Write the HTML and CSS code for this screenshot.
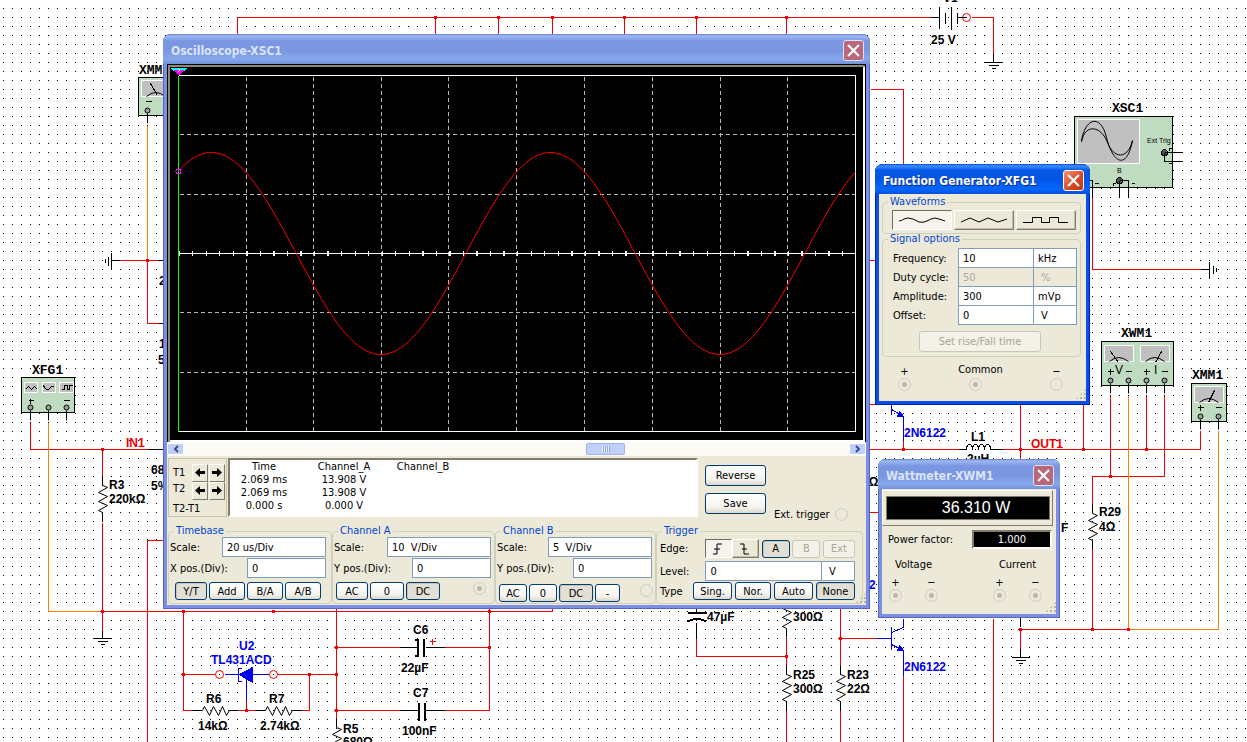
FILE: index.html
```html
<!DOCTYPE html>
<html lang="en">
<head>
<meta charset="utf-8">
<title>Circuit simulation</title>
<link rel="stylesheet" href="styles.css">
</head>
<body>
<main class="desktop">
<svg class="schematic" aria-label="Schematic">
  <defs>
    <pattern id="grid" width="9" height="9" patternUnits="userSpaceOnUse"><rect x="3" y="8" width="1" height="1"/></pattern>
    <g id="pin"><circle r="2.5" class="pin"/><path d="M0 3V13"/></g>
    <path id="res" d="M0 0V9L5 11L-4 16L5 20L-4 25L5 29L-4 34L0 36V45"/>
    <path id="resh" d="M0 0H10L12 -4L17 5L21 -4L26 5L30 -4L34 5L37 0H46"/>
    <g id="meter"><rect width="29" height="16" class="screen"/><path d="M5 16Q14 8 24 16"/></g>
  </defs>
  <rect width="100%" height="100%" fill="url(#grid)"/>
  <g transform="translate(.5 .5)" class="lines">
    <g class="red">
      <path d="M237 34V17H930M435 17V34M498 17V34M552 17V34M624 17V34M696 17V34M786 17V34M971 17H993V53"/>
      <path d="M870 89H903V165M868 260H878M868 404H878M868 449H958M1002 449H1200V430M868 512H880M903 440V449M1020 403V460M1083 403V449"/>
      <path d="M1110 395V476M1146 395V449M1164 395V476H1092V507M1092 548V629M1020 629V648M1020 629H1128M1092 197V269H1200"/>
      <path d="M119 260H157M147 260V323H158M30 422V449H147M102 449V475M102 522V630M102 611H552V606M163 540H147V742"/>
      <path d="M183 611V710H193M183 674H214M277 674H336M309 674V710H300M238 710H255M246 700V710M336 606V718M336 647H399M444 647H489M336 710H399M444 710H489V606"/>
      <path d="M696 638V656H786M786 638V665M786 710V742M840 606V665M840 710V742M840 638H876M903 675V742M993 618V742"/>
      <circle cx="966" cy="17" r="4"/><circle cx="219" cy="674" r="4"/><circle cx="273" cy="674" r="4"/>
      <path d="M429 641H435M432 638V644"/>
    </g>
    <g class="orange"><path d="M147 125V260M48 422V611H102M1128 395V629H1218V430"/></g>
    <g class="blue">
      <path d="M891 402V414M891 409L903 416V440"/><path class="fill" d="M903 416L899 411L897 416Z"/>
      <path d="M224 674H268M246 676V700M241 668H238V681H241"/><path class="fill" d="M239 674L252 667V682Z"/>
      <path d="M876 638H891M891 626V649M891 632L903 627V618M891 644L903 650V675"/><path class="fill" d="M903 650L899 645L897 650Z"/>
    </g>
    <g class="black">
      <path d="M930 17H939M939 6V28M945 12V23M951 6V29M957 12V23M957 17H966M993 53V62M984 62H1002M988 65H998M991 68H995"/>
      <path d="M1200 269H1209M1209 261V278M1213 265V273M1216 267V271M119 260H111M111 252V269M108 256V265M105 258V262M157 260H163M158 323H163M147 449H163"/>
      <path d="M102 630V638M93 638H111M97 641H107M100 644H104M1020 648V657M1011 657H1029M1015 660H1025M1018 663H1022M1020 616V626"/>
      <path d="M958 449H966Q966 444 969 444Q972 444 972 449Q972 444 975 444Q978 444 978 449Q978 444 981 444Q984 444 984 449Q984 444 987 444Q990 444 990 449H1002"/>
      <path d="M399 647H417M426 647H444M399 710H418M424 710H444M696 622V638M696 606V612"/>
      <path class="thick" d="M414 639H417V655H414M423 638V656M418 702V720M424 702V720M687 612H706M687 621Q696 616 706 621"/>
      <use href="#res" x="102" y="476"/><use href="#res" x="1092" y="504"/><use href="#res" x="786" y="592"/><use href="#res" x="786" y="665"/><use href="#res" x="840" y="665"/><use href="#res" x="336" y="718"/>
      <use href="#resh" x="192" y="710"/><use href="#resh" x="255" y="710"/>
    </g>
    <g class="nodes">
      <circle cx="435" cy="17" r="1.5"/><circle cx="498" cy="17" r="1.5"/><circle cx="552" cy="17" r="1.5"/><circle cx="624" cy="17" r="1.5"/><circle cx="696" cy="17" r="1.5"/><circle cx="786" cy="17" r="1.5"/>
      <circle cx="147" cy="260" r="1.5"/><circle cx="102" cy="449" r="1.5"/><circle cx="102" cy="611" r="1.5"/><circle cx="183" cy="611" r="1.5"/><circle cx="273" cy="611" r="1.5"/><circle cx="489" cy="611" r="1.5"/>
      <circle cx="183" cy="674" r="1.5"/><circle cx="309" cy="674" r="1.5"/><circle cx="336" cy="674" r="1.5"/><circle cx="336" cy="647" r="1.5"/><circle cx="336" cy="710" r="1.5"/><circle cx="489" cy="647" r="1.5"/><circle cx="246" cy="710" r="1.5"/>
      <circle cx="786" cy="656" r="1.5"/><circle cx="840" cy="638" r="1.5"/><circle cx="903" cy="449" r="1.5"/><circle cx="1020" cy="449" r="1.5"/><circle cx="1083" cy="449" r="1.5"/><circle cx="1146" cy="449" r="1.5"/>
      <circle cx="1110" cy="476" r="1.5"/><circle cx="1020" cy="629" r="1.5"/><circle cx="1092" cy="629" r="1.5"/><circle cx="1128" cy="629" r="1.5"/>
    </g>
    <g class="black">
      <rect x="1074" y="116" width="98" height="71" class="device"/><rect x="1077" y="119" width="62" height="44" class="screen"/>
      <path class="smooth" d="M1081 141C1084 118 1100 112 1106 137S1126 171 1132 140M1081 141C1085 122 1101 126 1107 142S1127 160 1132 140"/>
      <circle cx="1164" cy="152" r="3" class="jack"/><path d="M1164 152H1182M1164 152V161H1182M1168 148H1171M1169 147V150M1168 163H1172"/>
      <circle cx="1119" cy="180" r="3" class="jack"/><path d="M1119 180V197M1119 180H1128V197M1112 183H1115M1113 182V185M1131 183H1134M1089 180H1092V197M1094 183H1098"/>

      <rect x="1101" y="341" width="72" height="44" class="device"/><use href="#meter" x="1104" y="345"/><use href="#meter" x="1140" y="345"/>
      <path d="M1110 351L1118 362M1161 351L1155 362M1107 371H1113M1110 368V374M1125 371H1131M1143 371H1149M1146 368V374M1161 371H1167"/>
      <use href="#pin" x="1110" y="380"/><use href="#pin" x="1128" y="380"/><use href="#pin" x="1146" y="380"/><use href="#pin" x="1164" y="380"/>

      <rect x="1191" y="383" width="35" height="38" class="device"/><use href="#meter" x="1194" y="386"/>
      <path d="M1214 390L1208 402M1197 407H1203M1200 404V410M1215 407H1221"/><use href="#pin" x="1200" y="416"/><use href="#pin" x="1218" y="416"/>

      <rect x="138" y="77" width="36" height="38" class="device"/><use href="#meter" x="141" y="80"/>
      <path d="M150 83L157 95M145 101H151"/><use href="#pin" x="147" y="110"/>

      <rect x="21" y="377" width="53" height="35" class="device"/>
      <rect x="24" y="382" width="13" height="10" class="screen"/><rect x="42" y="382" width="13" height="10" class="screen"/><rect x="59" y="382" width="14" height="10" class="screen"/>
      <path d="M25 389L28 386L31 389L34 386L37 389M43 385Q46 392 49 388T54 387M61 389H64V385H67V389H69V385H72M28 400H33M30 398V403M63 400H69"/>
      <use href="#pin" x="30" y="407"/><use href="#pin" x="48" y="407"/><use href="#pin" x="66" y="407"/>
    </g>
  </g>
  <g class="name">
    <text x="32" y="374">XFG1</text><text x="139" y="74">XMM2</text><text x="1112" y="112">XSC1</text><text x="1121" y="337">XWM1</text><text x="1192" y="379">XMM1</text>
  </g>
  <g class="label">
    <text x="109" y="489">R3</text><text x="109" y="503">220kΩ</text><text x="151" y="474">68</text><text x="151" y="490">5%</text>
    <text x="159" y="285">2</text><text x="159" y="348">1</text><text x="158" y="364">5</text>
    <text x="943" y="2">V1</text><text x="931" y="44">25 V</text><text x="971" y="441">L1</text><text x="967" y="463">2µH</text>
    <text x="862" y="486">5Ω</text><text x="1061" y="532">F</text><text x="1099" y="516">R29</text><text x="1099" y="531">4Ω</text>
    <text x="413" y="634">C6</text><text x="401" y="672">22µF</text><text x="413" y="697">C7</text><text x="402" y="735">100nF</text><text x="402" y="751">5%</text>
    <text x="206" y="703">R6</text><text x="198" y="730">14kΩ</text><text x="269" y="703">R7</text><text x="260" y="730">2.74kΩ</text><text x="343" y="733">R5</text><text x="343" y="746">680Ω</text>
    <text x="707" y="621">47µF</text><text x="793" y="621">300Ω</text><text x="793" y="679">R25</text><text x="793" y="693">300Ω</text><text x="847" y="679">R23</text><text x="847" y="693">22Ω</text>
  </g>
  <g class="label label-blue"><text x="239" y="650">U2</text><text x="211" y="664">TL431ACD</text><text x="904" y="437">2N6122</text><text x="904" y="671">2N6122</text><text x="869" y="589">2</text></g>
  <g class="label label-red"><text x="126" y="447">IN1</text><text x="1031" y="448">OUT1</text></g>
  <g class="tiny"><text x="1147" y="143">Ext Trig</text><text x="1117" y="173">B</text></g>
  <g class="unit-mark"><text x="1115" y="374">V</text><text x="1154" y="374">I</text></g>
</svg>

<section class="window scope">
  <header class="titlebar"><h2>Oscilloscope-XSC1</h2><button class="close" aria-label="Close"><svg viewBox="0 0 12 12"><path d="M1 1L11 11M11 1L1 11"/></svg></button></header>
  <div class="display">
    <svg class="plot" viewBox="0 0 693 373" preserveAspectRatio="none">
      <g transform="translate(.5 .5)">
        <path class="grat" d="M76 9V364M143 9V364M211 9V364M278 9V364M346 9V364M414 9V364M482 9V364M550 9V364M617 9V364M9 67H685M9 127H685M9 245H685M9 305H685"/>
        <path class="frame" d="M8 8H685V364H8M8 186H685"/>
        <path class="frame ticks" pathLength="500" d="M8 186H685"/>
        <path class="cursor" d="M8 8V364"/>
        <svg x="8" y="0" width="677" height="373"><path class="trace" d="M-51.75 186c27.6-51.7 54.1-101 84.75-101s57.1 49.3 84.75 101c27.6 51.7 54.1 101 84.75 101s57.1-49.3 84.75-101c27.6-51.7 54.1-101 84.75-101s57.1 49.3 84.75 101c27.6 51.7 54.1 101 84.75 101s57.1-49.3 84.75-101c27.6-51.7 54.1-101 84.75-101"/></svg>
        <path fill="#0ff" d="M-1 0H17L14 3H2Z"/><path fill="#f0f" d="M2 2H14L8 8Z"/><path stroke="#ff8" d="M7 2H9M9 3L7 5"/>
        <circle cx="8" cy="104" r="2.5" fill="none" stroke="#f0f"/>
      </g>
    </svg>
  </div>
  <div class="scroll">
    <button aria-label="Scroll left"><svg viewBox="0 0 6 8"><path d="M5 1L2 4L5 7"/></svg></button>
    <span class="thumb"></span>
    <button aria-label="Scroll right"><svg viewBox="0 0 6 8"><path d="M1 1L4 4L1 7"/></svg></button>
  </div>
  <div class="readout">
    <div class="cursors">
      <span>T1</span><div class="pair"><button aria-label="T1 left"><svg viewBox="0 0 10 10"><path d="M5 0V3H10V6H5V9L0 4.500Z"/></svg></button><button aria-label="T1 right"><svg viewBox="0 0 10 10"><path d="M5 0V3H0V6H5V9L10 4.500Z"/></svg></button></div>
      <span class="second">T2</span><div class="pair"><button aria-label="T2 left"><svg viewBox="0 0 10 10"><path d="M5 0V3H10V6H5V9L0 4.500Z"/></svg></button><button aria-label="T2 right"><svg viewBox="0 0 10 10"><path d="M5 0V3H0V6H5V9L10 4.500Z"/></svg></button></div>
      <span class="delta">T2-T1</span>
    </div>
    <div class="list">
      <table>
        <tr><th>Time</th><th>Channel_A</th><th>Channel_B</th></tr>
        <tr><td>2.069 ms</td><td>13.908 V</td><td></td></tr>
        <tr><td>2.069 ms</td><td>13.908 V</td><td></td></tr>
        <tr><td>0.000 s</td><td>0.000 V</td><td></td></tr>
      </table>
    </div>
    <div class="actions">
      <button class="btn">Reverse</button><button class="btn">Save</button>
      <label class="ext">Ext. trigger <input type="radio" disabled></label>
    </div>
  </div>
  <div class="groups">
    <fieldset><legend>Timebase</legend>
      <div class="row"><label for="ts">Scale:</label><input id="ts" class="field wide" value="20 us/Div"></div>
      <div class="row"><label for="tx">X pos.(Div):</label><input id="tx" class="field" value="0"></div>
      <div class="buttons"><button class="btn on w31">Y/T</button><button class="btn w36">Add</button><button class="btn w36">B/A</button><button class="btn w36">A/B</button></div>
    </fieldset>
    <fieldset><legend>Channel A</legend>
      <div class="row"><label for="as">Scale:</label><input id="as" class="field wide" value="10  V/Div"></div>
      <div class="row"><label for="ay">Y pos.(Div):</label><input id="ay" class="field" value="0"></div>
      <div class="buttons chan"><button class="btn w31">AC</button><button class="btn w34">0</button><button class="btn on w34">DC</button><input type="radio" aria-label="Channel A terminal" class="linked" disabled></div>
    </fieldset>
    <fieldset><legend>Channel B</legend>
      <div class="row"><label for="bs">Scale:</label><input id="bs" class="field wide" value="5  V/Div"></div>
      <div class="row"><label for="by">Y pos.(Div):</label><input id="by" class="field" value="0"></div>
      <div class="buttons chan low"><button class="btn w28">AC</button><button class="btn w28">0</button><button class="btn on w34">DC</button><button class="btn w25">-</button><input type="radio" aria-label="Channel B terminal" disabled></div>
    </fieldset>
    <fieldset class="trigger"><legend>Trigger</legend>
      <div class="row edge"><span>Edge:</span><div class="edges"><button class="flat sunk" aria-label="Rising edge"><svg viewBox="0 0 12 12"><path d="M1 11H5V1H10M2 6H8"/></svg></button><button class="flat" aria-label="Falling edge"><svg viewBox="0 0 12 12"><path d="M1 1H5V11H10M3 6H8"/></svg></button></div><button class="btn on w28">A</button><button class="btn w28" disabled>B</button><button class="btn w31" disabled>Ext</button></div>
      <div class="row level"><label for="lv">Level:</label><input id="lv" class="field" value="0"><input class="field unit" aria-label="Level unit" value="V"></div>
      <div class="row type"><span>Type</span><button class="btn w38">Sing.</button><button class="btn w36">Nor.</button><button class="btn w38">Auto</button><button class="btn on w38">None</button></div>
    </fieldset>
  </div>
  <span class="grip"></span>
</section>

<section class="window active fgen">
  <header class="titlebar"><h2>Function Generator-XFG1</h2><button class="close" aria-label="Close"><svg viewBox="0 0 12 12"><path d="M1 1L11 11M11 1L1 11"/></svg></button></header>
  <fieldset class="waves"><legend>Waveforms</legend>
    <div class="wavebar">
      <button class="flat sunk" aria-label="Sine"><svg viewBox="0 0 46 8"><path d="M0 5Q2 5 5 3T14 3L20 6Q24 7 28 5L32 3Q36 1 40 3L46 5"/></svg></button>
      <button class="flat" aria-label="Triangle"><svg viewBox="0 0 46 8"><path d="M0 6L9 2L18 6L27 2L37 6L46 3"/></svg></button>
      <button class="flat" aria-label="Square"><svg viewBox="0 0 46 8"><path d="M0 6.500H9.500V1.500H18.500V6.500H26.500V1.500H35.500V6.500H45"/></svg></button>
    </div>
  </fieldset>
  <fieldset class="signal"><legend>Signal options</legend>
    <div class="params">
      <label for="fr">Frequency:</label><input id="fr" class="field" value="10"><input class="field" aria-label="Frequency unit" value="kHz">
      <label for="du">Duty cycle:</label><input id="du" class="field" value="50" disabled><input class="field pad" aria-label="Duty cycle unit" value="%" disabled>
      <label for="am">Amplitude:</label><input id="am" class="field" value="300"><input class="field" aria-label="Amplitude unit" value="mVp">
      <label for="of">Offset:</label><input id="of" class="field" value="0"><input class="field pad" aria-label="Offset unit" value="V">
    </div>
    <button class="btn rise" disabled>Set rise/Fall time</button>
  </fieldset>
  <div class="terminals">
    <label>+<input type="radio" class="linked" disabled></label><label>Common<input type="radio" class="linked" disabled></label><label>−<input type="radio" disabled></label>
  </div>
  <span class="grip"></span>
</section>

<section class="window watt">
  <header class="titlebar"><h2>Wattmeter-XWM1</h2><button class="close" aria-label="Close"><svg viewBox="0 0 12 12"><path d="M1 1L11 11M11 1L1 11"/></svg></button></header>
  <div class="panel"><output class="power">36.310 W</output></div>
  <div class="factor"><span>Power factor:</span><output>1.000</output></div>
  <div class="probes">
    <div class="probe"><span>Voltage</span><div><label>+<input type="radio" class="linked" disabled></label><label>−<input type="radio" class="linked" disabled></label></div></div>
    <div class="probe"><span>Current</span><div><label>+<input type="radio" class="linked" disabled></label><label>−<input type="radio" class="linked" disabled></label></div></div>
  </div>
  <span class="grip"></span>
</section>
</main>
</body>
</html>
```
FILE: styles.css
```css
* { box-sizing: border-box; }
body { margin: 0; background: #fff; }
.desktop, .desktop button, .desktop input {
  font-family: "DejaVu Sans Condensed", "Noto Sans", sans-serif;
  font-size: 11px;
  color: #000;
}
.desktop { position: relative; min-height: 100vh; overflow: hidden; line-height: 13px; }

/* Schematic canvas */
.schematic { position: absolute; inset: 0; width: 100%; height: 100%; }
.lines { fill: none; stroke-width: 1; shape-rendering: crispEdges; }
.red { stroke: #f00000; }
.orange { stroke: #ff8000; }
.blue { stroke: #0000f0; }
.blue .fill { fill: #0000f0; }
.black { stroke: #000; }
.thick { stroke-width: 2; }
.red circle, .smooth, .black use { shape-rendering: auto; }
.nodes { fill: #f00000; stroke: #f00000; }
.device { fill: #c0dcc0; }
.screen { fill: #c0c0c0; stroke: #fff; }
.pin { fill: #a0a0a4; }
.jack { fill: #555; }
.name { font: bold 13px "Liberation Mono", monospace; }
.label { font: bold 12px "Liberation Sans", sans-serif; white-space: pre; }
.label-blue { fill: #0000f0; }
.label-red { fill: #f00000; }
.tiny { font: 7px "Liberation Sans", sans-serif; }
.unit-mark { font: 12px "Liberation Sans", sans-serif; }

/* Windows */
.window {
  position: absolute;
  padding: 0 4px 4px;
  border-radius: 8px 8px 0 0;
  background: #ece9d8;
  background-clip: content-box;
  box-shadow: inset 0 0 0 1px #5a64c8, inset 0 0 0 4px #7b8fe3;
}
.window.active { box-shadow: inset 0 0 0 1px #0020b0, inset 0 0 0 4px #0a50e8; }
.scope { left: 163px; top: 34px; width: 707px; }
.fgen { left: 875px; top: 164px; width: 215px; }
.watt { left: 878px; top: 459px; width: 182px; }
.titlebar {
  display: flex;
  align-items: center;
  justify-content: space-between;
  height: 30px;
  margin: 0 -4px;
  padding: 3px 6px 0 8px;
  border-radius: 8px 8px 0 0;
  background: linear-gradient(#6a80d0 0, #9db8f4 2px, #7b96e1 7px, #7b96e1 17px, #86a8ec 25px, #7590da 30px);
}
.active .titlebar { background: linear-gradient(#0848c8 0, #3a90ff 2px, #0858e8 6px, #0454e4 15px, #0666fc 25px, #0450d8 30px); }
.titlebar h2 { margin: 0; font-size: 12px; line-height: 16px; color: #dbe5fa; white-space: nowrap; }
.active h2 { color: #fff; text-shadow: 1px 1px #0a2a90; }
.close { width: 21px; height: 21px; padding: 3px; border: 1px solid #dce3f8; border-radius: 3px; background: #b86878; }
.active .close { background: linear-gradient(135deg, #f09078, #d84820 60%, #c03810); border-color: #fff; }
.close svg { display: block; width: 13px; height: 13px; stroke: #fff; stroke-width: 2; }
.grip {
  position: absolute;
  right: 4px;
  bottom: 4px;
  width: 12px;
  height: 12px;
  background: repeating-conic-gradient(#b8b4a2 0 25%, transparent 0 100%) 0 0 / 4px 4px;
  clip-path: polygon(100% 0, 100% 100%, 0 100%);
}

/* Controls */
.btn {
  height: 18px;
  padding: 0;
  border: 1px solid #003c74;
  border-radius: 3px;
  background: linear-gradient(#fff, #f4f3ee 70%, #dcd8cc);
  text-align: center;
}
.btn.on { background: #e2dfd4; box-shadow: inset 1px 1px #c8c4b8; }
.desktop .btn:disabled { border-color: #c9c7ba; background: #f3f1e8; color: #a8a595; }
.w25 { width: 25px; }
.w28 { width: 28px; }
.w31 { width: 32px; }
.w34 { width: 34px; }
.w36 { width: 36px; }
.w38 { width: 39px; }
.field { width: 79px; height: 20px; min-width: 0; padding: 0 4px; border: 1px solid #7f9db9; border-radius: 0; background: #fff; }
.field.wide { width: 104px; }
.desktop .field:disabled { background: #ece9d8; color: #aca899; }
.flat { display: flex; align-items: center; justify-content: center; padding: 0; border: 1px solid; border-color: #fff #807c6e #807c6e #fff; background: #ece9d8; box-shadow: inset -1px -1px #c0bcac; }
.flat.sunk { border-color: #706c60 #fff #fff #706c60; background: #f5f3eb; box-shadow: none; }
.flat svg { fill: none; stroke: #000; }
input[type="radio"] { appearance: none; width: 13px; height: 13px; margin: 0; border: 1px solid #cfccbe; border-radius: 50%; }
input[type="radio"].linked { background: radial-gradient(circle, #bbb8aa 0 2px, transparent 3px); }
fieldset { min-width: 0; margin: 0; padding: 0; border: 1px solid #d0d0bf; border-radius: 4px; }
legend { margin-left: 5px; padding: 0 2px; line-height: 12px; color: #0046d5; }

/* Oscilloscope */
.display { height: 378px; padding: 2px; border: 1px solid #000; border-bottom: 0; background: #000; box-shadow: inset 2px 2px #8c897c, inset -2px -2px #fff; }
.plot { display: block; width: 100%; height: 100%; fill: none; background: #000; shape-rendering: crispEdges; }
.grat { stroke: #b8b8b8; stroke-dasharray: 4 3; }
.frame { stroke: #fff; }
.ticks { stroke-width: 5; stroke-dasharray: 1 9; }
.cursor { stroke: #0f0; }
.trace { stroke: #ff0000; shape-rendering: auto; }
.scroll { display: flex; align-items: center; justify-content: space-between; height: 14px; background: #fbfaf5; }
.scroll button { display: grid; place-items: center; width: 17px; height: 12px; padding: 0; border: 1px solid #fff; border-radius: 2px; background: #bfcffa; }
.scroll svg { width: 6px; height: 8px; fill: none; stroke: #3c5080; stroke-width: 2; }
.thumb { width: 39px; height: 12px; margin-left: 178px; border: 1px solid #a0b4e8; border-radius: 2px; background: repeating-linear-gradient(90deg, #eef4ff 0 1px, #8aa4e4 1px 2px) center / 8px 6px no-repeat #bfd0fb; }
.readout { display: flex; height: 59px; margin: 2px 0 8px; padding-left: 1px; }
.cursors { display: grid; grid-template-columns: 19px 34px; grid-template-rows: 18px 18px 14px; align-content: start; width: 59px; padding: 5px 1px 0 4px; border: 1px solid #c6c3b2; }
.cursors > span { padding-top: 2px; white-space: nowrap; }
.cursors .second { padding-top: 0; }
.cursors .delta { grid-column: span 2; }
.pair { display: flex; gap: 1px; }
.pair button { display: grid; place-items: center; width: 16px; height: 18px; padding: 0; border: 1px solid; border-color: #fff #807c6e #807c6e #fff; background: #ece9d8; }
.pair svg { width: 10px; height: 10px; }
.list { width: 470px; margin-left: 1px; border: 2px solid; border-color: #807c6e #fff #fff #807c6e; background: #fff; }
table { border-collapse: collapse; }
th, td { width: 66px; padding: 0; font-weight: normal; text-align: center; line-height: 13px; }
th:first-child, td:first-child { width: 68px; }
th:nth-child(2), td:nth-child(2) { width: 92px; }
.actions { display: flex; flex-direction: column; align-items: flex-start; gap: 7px; padding: 7px 0 0 7px; }
.actions .btn { width: 61px; height: 21px; flex: none; }
.ext { display: flex; align-items: center; gap: 5px; margin: -13px 0 0 69px; white-space: nowrap; }
.groups { display: grid; grid-template-columns: 164fr 163fr 161fr 207fr; padding: 0 3px 1px 1px; }
.groups fieldset { height: 79px; }
.row { display: flex; align-items: center; justify-content: space-between; padding: 0 5px 0 1px; margin-bottom: 1px; white-space: nowrap; }
fieldset + fieldset .row { padding-right: 3px; }
.buttons { display: flex; gap: 2px; padding: 3px 0 0 6px; }
.buttons.chan { padding-left: 3px; }
.buttons.low { padding-top: 5px; }
.buttons input[type="radio"] { margin: 0 8px 0 auto; }
.buttons.low input[type="radio"] { margin-right: 2px; }
.trigger .row { padding: 0 7px 0 3px; }
.edge { height: 23px; }
.edges { display: flex; margin-left: 14px; }
.edges .flat { width: 27px; height: 19px; }
.edges svg { width: 12px; height: 12px; }
.level .field { flex: 1; margin-left: 16px; }
.level .field.unit { flex: none; width: 34px; margin-left: -1px; padding-left: 7px; }
.type { gap: 3px; }
.type span { margin-right: auto; }

/* Function generator */
.waves { margin: 2px 5px 0 3px; padding-bottom: 3px; }
.wavebar { display: grid; grid-template-columns: 1fr 1fr 1fr; gap: 2px; padding: 2px 4px 0 9px; }
.wavebar .flat { height: 20px; }
.wavebar svg { width: 46px; height: 8px; }
.signal { margin: -1px 5px 0 3px; padding: 0 3px 4px 10px; }
.signal legend { margin-left: -5px; }
.params { display: grid; grid-template-columns: 65px 76px 1fr; align-items: center; padding-top: 3px; }
.params .field { width: 100%; margin: 0 0 -1px 0; }
.params .field + .field { width: auto; margin-left: -1px; }
.params .field.pad { padding-left: 7px; }
.params label { padding-top: 1px; }
.rise { display: block; width: 122px; height: 21px; margin: 7px 0 0 26px; }
.terminals { display: flex; justify-content: space-between; height: 44px; padding: 6px 23px 0 19px; }
.terminals label { display: flex; flex-direction: column; align-items: center; }
.terminals label:not(:nth-child(2)) { padding-top: 2px; }
.terminals label:nth-child(2) { gap: 2px; }
.terminals label:nth-child(2) input { margin-right: 10px; }

/* Wattmeter */
.panel { margin: 1px 3px 0 0; padding: 5px 2px 5px 3px; border: 1px solid; border-color: #fff #807c6e #807c6e #fff; }
.power { display: block; height: 24px; padding-left: 16px; border: 1px solid #807c6e; background: #000; color: #fff; font: 16px/22px "Liberation Sans", sans-serif; text-align: center; }
.factor { display: flex; justify-content: space-between; align-items: center; padding: 4px 4px 0 6px; }
.factor output { width: 80px; height: 19px; border: 2px solid; border-color: #807c6e #fff #fff #807c6e; background: #000; color: #fff; line-height: 15px; text-align: center; }
.probes { display: flex; justify-content: space-between; height: 65px; padding: 9px 14px 0 7px; }
.probe { display: flex; flex-direction: column; align-items: center; gap: 5px; }
.probe > div { display: flex; gap: 23px; }
.probe label { display: flex; flex-direction: column; align-items: center; }
```
